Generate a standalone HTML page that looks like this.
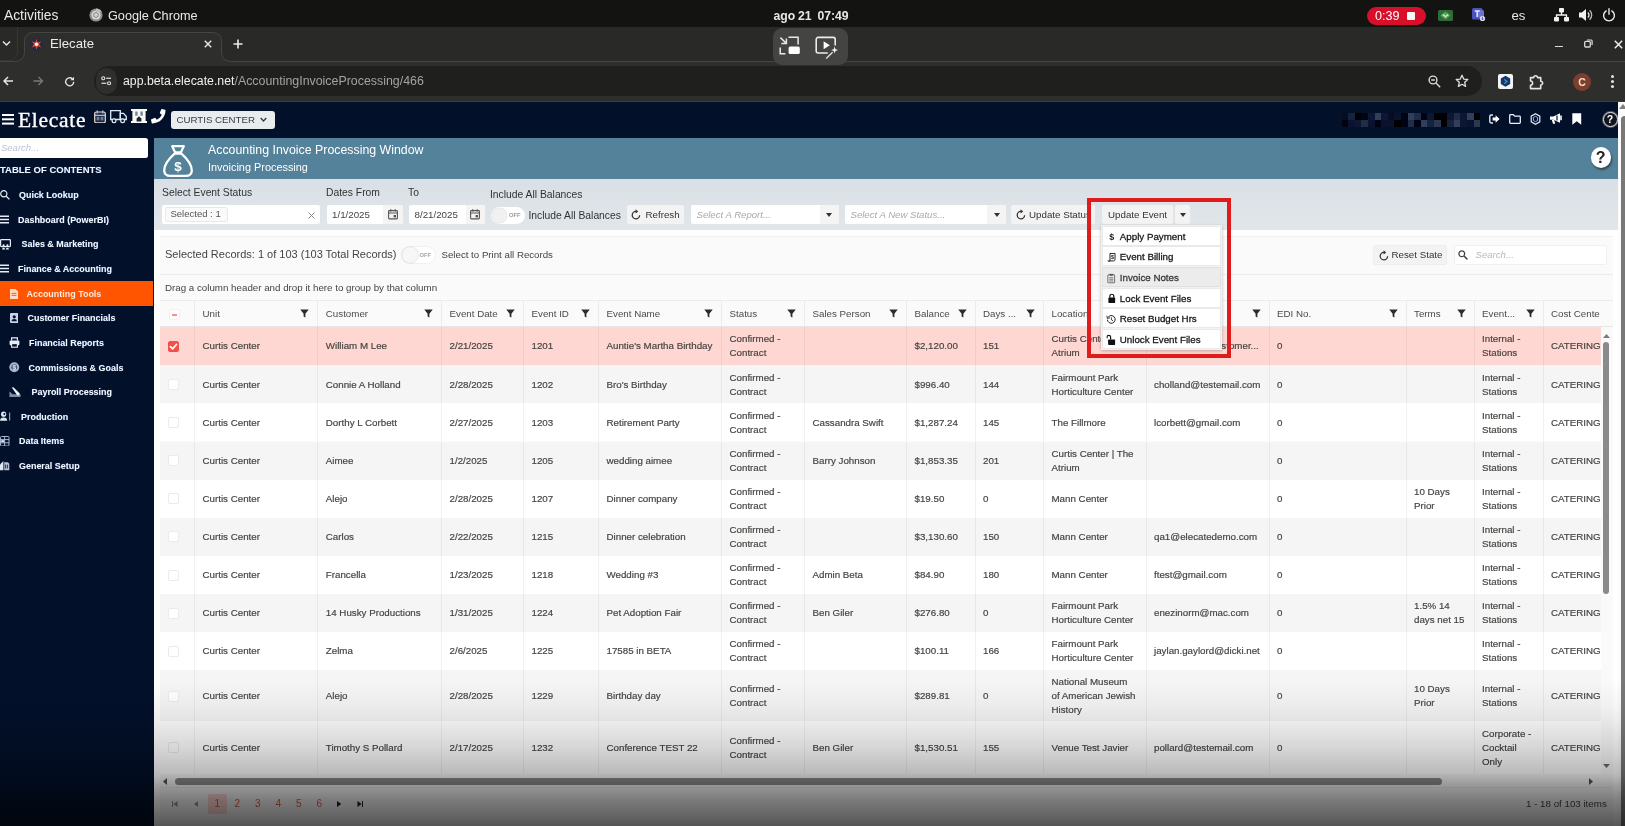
<!DOCTYPE html>
<html lang="en">
<head>
<meta charset="utf-8">
<title>Elecate</title>
<style>
*{box-sizing:border-box;margin:0;padding:0}
html,body{width:1625px;height:826px;overflow:hidden;background:#02102a}
body{font-family:"Liberation Sans",sans-serif;font-size:9.75px;color:#4a4a4a;position:relative;filter:blur(.45px)}
.abs{position:absolute}
svg{display:block}
/* ---------- OS top bar ---------- */
#os{position:absolute;left:0;top:0;width:1625px;height:27px;z-index:10;background:#131312;color:#e8e8e8;font-size:13px}
#os .t{position:absolute;top:0;line-height:32px;white-space:nowrap;font-weight:500}
/* ---------- chrome ---------- */
#tabs{position:absolute;left:0;top:27px;width:1625px;height:34px;background:#292927}
#tool{position:absolute;left:0;top:61px;width:1625px;height:40.500px;background:#2e2e2c;border-top:1px solid #454543;border-bottom:1px solid #3d3d3b}
#tab{position:absolute;left:24px;top:5px;width:198px;height:29px;z-index:4}
#url{position:absolute;left:94px;top:4px;width:1388px;height:30px;border-radius:15px;background:#1f1f1e}
/* ---------- app ---------- */
#app{position:absolute;left:0;top:102px;width:1618px;height:724px;background:#fff;overflow:hidden}
#hdr{position:absolute;left:0;top:0;width:1618px;height:35.5px;background:#02102a}
#side{position:absolute;left:0;top:35px;width:154px;height:690px;background:#02102a;color:#f4f7fb}
#side .it{position:absolute;left:0;width:152.500px;height:25px;font-weight:bold;font-size:8.950px;line-height:25px;white-space:nowrap;text-shadow:0 0 1px rgba(120,170,255,.55)}
#side .it span{position:absolute;top:.6px}
#side .it svg{position:absolute}
#ph{position:absolute;left:154px;top:35.500px;width:1464px;height:41.5px;background:#54829a;color:#fff}
#fb{position:absolute;left:154px;top:77px;width:1464px;height:51.400px;background:linear-gradient(#d9e0e5,#e1e6ea);color:#2a2a2a}
#fb .lb{position:absolute;font-size:10.330px;margin-top:.6px;white-space:nowrap;color:#303336}
.inp{position:absolute;top:25.5px;height:19.5px;background:#fff;border-radius:2px}
.btn{position:absolute;top:25.5px;height:19.5px;background:#f3f3f3;border-radius:2px;white-space:nowrap;font-size:9.75px;line-height:19.5px;color:#333}
.ph{font-style:italic;color:#a9a9a9}
/* grid */
#gw{position:absolute;left:160px;top:130px;width:1452.500px;height:600px;background:#fafafa}
#gw:before{content:"";position:absolute;left:0;top:0;width:100%;height:4px;background:#fff;border-bottom:1px solid #f1f1f1}
#tb{position:absolute;left:0;top:0;width:1452.500px;height:42.500px;border-bottom:1px solid #ececec}
#gp{position:absolute;left:0;top:43px;width:1452.500px;height:26px;line-height:25px;padding-left:5px;font-size:9.750px;color:#444;border-bottom:1px solid #ececec}
.ghead{position:absolute;left:0;top:69px;width:1452.500px;height:26px;background:#fafafa;border-bottom:1px solid #e6e6e6}
.hc{position:absolute;top:0;height:25px;border-left:1px solid #ebebeb;line-height:25px;color:#4a4a4a;white-space:nowrap;overflow:hidden}
.hc:first-child{border-left:none}
.hc .ht{position:absolute;left:7.500px;top:0}
.fn{position:absolute;right:8px;top:8px;width:9px;height:9px;fill:#2b2b2b}
.gr{position:absolute;left:0;width:1441px;background:#fff}
.gr.alt{background:#f5f5f5}
.gr.sel{background:#ffd7d2}
.c{position:absolute;top:0;height:100%;border-left:1px solid rgba(0,0,0,.055);display:flex;align-items:center;padding:.6px 0 0 7.500px;line-height:14.100px;white-space:nowrap;overflow:hidden;color:#45423f;-webkit-text-stroke:.18px #4a4846}
.c0{border-left:none;padding:.6px 0 0 8px}
.cb{display:block;width:11px;height:11px;border:1px solid #ebebeb;border-radius:2px;background:#fff}
.cb.on{background:#f4504a;border-color:#f4504a}
.cb.on svg{width:11px;height:11px;margin:-1px}
.cbm{position:absolute;left:8.500px;top:8px;width:11px;height:11px;border:1px solid #f0f0f0;border-radius:2px;background:#fff}
.cbm:after{content:"";position:absolute;left:2px;top:4px;width:5px;height:1.500px;background:#f3938c}
.di{position:absolute;left:.5px;width:119.500px;height:20px;background:#fff;border:1px solid #e9e9e9;white-space:nowrap;font-size:9.750px;color:#111;-webkit-text-stroke:.28px #1c1c1c}
.di.hov{background:#ececec;border-color:#e0e0e0}
.di svg{position:absolute;transform:translateX(-1.200px) scale(.9);transform-origin:50% 50%}
.di span{position:absolute;left:17.300px;top:0;line-height:19px}
</style>
</head>
<body>
<div id="os">
 <span class="t" style="left:4px;font-size:13.800px">Activities</span>
 <svg class="abs" style="left:89px;top:8px" width="14" height="14" viewBox="0 0 14 14"><circle cx="7" cy="7" r="6.6" fill="#8d8d8d"/><circle cx="7" cy="7" r="4.6" fill="#d6d6d6"/><circle cx="7" cy="7" r="2.7" fill="#7a7a7a"/><path d="M7 .4A6.6 6.6 0 0 1 12.7 3.7H7z" fill="#bdbdbd"/><circle cx="7" cy="7" r="2" fill="#cfcfcf"/></svg>
 <span class="t" style="left:108px;font-size:12.7px">Google Chrome</span>
 <span class="t" style="left:773.500px;font-size:12.200px;font-weight:bold;word-spacing:-.5px">ago 21&nbsp; 07:49</span>
 <div class="abs" style="left:1367px;top:7px;width:58.5px;height:18px;border-radius:9px;background:#d70f2b"></div>
 <span class="t" style="left:1375px;font-size:12.6px;color:#fff">0:39</span>
 <div class="abs" style="left:1406.5px;top:11.5px;width:8.5px;height:8.5px;background:#f2f7f7;border-radius:1px"></div>
 <svg class="abs" style="left:1438px;top:10px" width="15" height="11" viewBox="0 0 15 11"><rect width="15" height="11" rx="1.5" fill="#2f6b35"/><path d="M7.5 1.6l5 3.9-5 3.9-5-3.9z" fill="#5aa35c"/><path d="M4.8 4.4l2.7 2.3 2.7-2.3" stroke="#d9ead9" stroke-width="1.3" fill="none"/></svg>
 <svg class="abs" style="left:1472px;top:7px" width="16" height="16" viewBox="0 0 16 16"><rect x="0" y="1" width="10.5" height="11.5" rx="1.5" fill="#4a53bd"/><rect x="6" y="3" width="6" height="8" rx="1.5" fill="#6b74d6"/><path d="M2.7 4h5M5.2 4v6" stroke="#e9ebff" stroke-width="1.5"/><circle cx="10.5" cy="11.5" r="2.6" fill="#dfe3f3"/><path d="M10.5 9.8v2.6M9.3 11.6l1.2 1.3 1.2-1.3" stroke="#4a53bd" stroke-width=".9" fill="none"/></svg>
 <span class="t" style="left:1511.5px;font-size:13.2px">es</span>
 <svg class="abs" style="left:1554px;top:8px" width="15" height="14" viewBox="0 0 15 14"><rect x="5" y="0" width="5" height="4.4" rx=".8" fill="#f2f2f2"/><rect x="0" y="9" width="5" height="4.4" rx=".8" fill="#f2f2f2"/><rect x="10" y="9" width="5" height="4.4" rx=".8" fill="#f2f2f2"/><path d="M7.5 4v3M2.5 9.5V7h10v2.5" stroke="#f2f2f2" stroke-width="1.3" fill="none"/></svg>
 <svg class="abs" style="left:1579px;top:8px" width="15" height="14" viewBox="0 0 15 14"><path d="M0 4.6h2.8L7 1v12L2.8 9.4H0z" fill="#f2f2f2"/><path d="M8.8 4.4a3.4 3.4 0 0 1 0 5.2" stroke="#f2f2f2" stroke-width="1.3" fill="none"/><path d="M10.6 2.3a6.3 6.3 0 0 1 0 9.4" stroke="#bdbdbd" stroke-width="1.3" fill="none"/></svg>
 <svg class="abs" style="left:1602px;top:8px" width="14" height="14" viewBox="0 0 14 14"><path d="M4.2 2.9a5.4 5.4 0 1 0 5.6 0" stroke="#ededed" stroke-width="1.4" fill="none" stroke-linecap="round"/><path d="M7 .8v5.4" stroke="#ededed" stroke-width="1.4" stroke-linecap="round"/></svg>
</div>

<div id="tabs">
 <svg class="abs" style="left:2px;top:13px" width="9" height="7" viewBox="0 0 9 7"><path d="M1 1.5l3.5 3.5L8 1.5" stroke="#e3e3e3" stroke-width="1.5" fill="none"/></svg>
 <div class="abs" style="left:-10px;top:-12px;width:28px;height:45.500px;border:1px solid #373735;border-radius:9px"></div>
 <svg class="abs" style="left:14px;top:5px;z-index:3" width="218" height="31" viewBox="0 0 218 31"><path d="M0 29.500Q10.500 29.500 10.500 20V9.500Q10.500 .5 19.500 .5H198.500Q207.500 .5 207.500 9.500V20Q207.500 29.500 218 29.500V31H0z" fill="#2e2e2c"/><path d="M0 29.500Q10.500 29.500 10.500 20V9.500Q10.500 .5 19.500 .5H198.500Q207.500 .5 207.500 9.500V20Q207.500 29.500 218 29.500" fill="none" stroke="#454543" stroke-width="1"/></svg>
 <div id="tab">
  <svg class="abs" style="left:6px;top:6px" width="13" height="13" viewBox="0 0 13 13"><circle cx="6.500" cy="6.500" r="6.300" fill="#1d2a48"/><path d="M6.500 .8l1.200 3.600 3.700-1.200-2.400 3 2.400 3.200-3.700-1.200-1.200 3.600-1.200-3.600-3.700 1.200 2.400-3.200-2.400-3 3.700 1.200z" fill="#d8482f"/><circle cx="6.500" cy="6.300" r="1.800" fill="#f3eee8"/></svg>
  <span class="abs" style="left:26px;top:0;line-height:24px;font-size:13.200px;color:#ececec;font-weight:500">Elecate</span>
  <svg class="abs" style="left:180px;top:8px" width="8" height="8" viewBox="0 0 8 8"><path d="M.8.8l6.400 6.400M7.200.8L.8 7.200" stroke="#e8e8e8" stroke-width="1.400"/></svg>
 </div>
 <svg class="abs" style="left:233px;top:12px" width="10" height="10" viewBox="0 0 10 10"><path d="M5 .5v9M.5 5h9" stroke="#ececec" stroke-width="1.6"/></svg>
 <div class="abs" style="left:773px;top:.5px;width:74.5px;height:37.5px;border-radius:9px;background:#444443;z-index:5"></div>
 <svg class="abs" style="left:779px;top:9px;z-index:6" width="22" height="20" viewBox="0 0 22 20"><path d="M9.5 1.2h9.6v7.2M1.2 11.5v6.2h5.2" stroke="#e9e9e9" stroke-width="1.5" fill="none"/><rect x="9.6" y="10.4" width="11.2" height="7.6" rx="1.6" fill="#fff"/><path d="M1.4 1.6l5.6 5.4M7.4 2.4v5h-5" stroke="#e9e9e9" stroke-width="1.5" fill="none"/></svg>
 <svg class="abs" style="left:815px;top:9px;z-index:6" width="26" height="25" viewBox="0 0 26 25"><path d="M20.2 9.5V3.4a2 2 0 0 0-2-2H3.2a2 2 0 0 0-2 2V15a2 2 0 0 0 2 2h9.6" stroke="#ececec" stroke-width="1.6" fill="none"/><path d="M8.6 5.2l6.2 4-6.2 4z" fill="#fff"/><path d="M19.6 10.6l.9 2.6 2.6.9-2.6.9-.9 2.6-.9-2.6-2.6-.9 2.6-.9z" fill="#f4f4f4"/><path d="M17.6 16.2l-6.4 6.4" stroke="#e0e0e0" stroke-width="1.4"/></svg>
 <div class="abs" style="left:1555px;top:18.5px;width:8px;height:1.6px;background:#d9d9d9"></div>
 <svg class="abs" style="left:1584px;top:12px" width="9" height="9" viewBox="0 0 9 9"><rect x=".7" y="2.4" width="5.6" height="5.6" rx="1" stroke="#dcdcdc" stroke-width="1.3" fill="none"/><path d="M3 1h4.2a.9.9 0 0 1 .9.9V6" stroke="#dcdcdc" stroke-width="1.2" fill="none"/></svg>
 <svg class="abs" style="left:1614px;top:13px" width="9" height="9" viewBox="0 0 9 9"><path d="M.8.8l7.4 7.4M8.200.8L.8 8.200" stroke="#ececec" stroke-width="1.5"/></svg>
</div>
<div id="tool">
 <svg class="abs" style="left:3px;top:14px" width="10.500" height="10" viewBox="0 0 13 12"><path d="M6.2 1L1.200 6l5 5M1.400 6h11" stroke="#e6e6e6" stroke-width="1.900" fill="none"/></svg>
 <svg class="abs" style="left:33px;top:14px" width="10.500" height="10" viewBox="0 0 13 12"><path d="M6.800 1l5 5-5 5M11.600 6H.6" stroke="#7a7a78" stroke-width="1.6" fill="none"/></svg>
 <svg class="abs" style="left:63.500px;top:13.500px" width="11.500" height="11.500" viewBox="0 0 14 14"><path d="M11.800 7a4.900 4.900 0 1 1-1.500-3.500" stroke="#e6e6e6" stroke-width="1.600" fill="none"/><path d="M12.200.8v4.400H7.800z" fill="#e6e6e6"/></svg>
 <div id="url">
  <div class="abs" style="left:2px;top:2px;width:21px;height:26px;border-radius:13px;background:#2f2f2d"></div>
  <svg class="abs" style="left:7px;top:10px" width="10.500" height="9.700" viewBox="0 0 13 12"><circle cx="2.800" cy="2.800" r="1.900" stroke="#dedede" stroke-width="1.400" fill="none"/><path d="M6.400 2.800h6" stroke="#dedede" stroke-width="1.500"/><circle cx="10" cy="9" r="1.900" stroke="#dedede" stroke-width="1.400" fill="none"/><path d="M.6 9h6" stroke="#dedede" stroke-width="1.500"/></svg>
  <span class="abs" style="left:29px;top:0;line-height:30px;font-size:12.300px;color:#f0f0f0;white-space:nowrap">app.beta.elecate.net<span style="color:#a3a3a1;font-size:12.400px">/AccountingInvoiceProcessing/466</span></span>
  <svg class="abs" style="left:1334px;top:9px" width="13" height="13" viewBox="0 0 13 13"><circle cx="5" cy="5" r="3.900" stroke="#dcdcdc" stroke-width="1.400" fill="none"/><path d="M8 8l4.200 4.200M3.200 5h3.600" stroke="#dcdcdc" stroke-width="1.400"/></svg>
  <svg class="abs" style="left:1361px;top:8px" width="14" height="14" viewBox="0 0 14 14"><path d="M7 1.300l1.700 3.800 4.100.4-3.100 2.800.9 4.100L7 10.300l-3.600 2.100.9-4.100L1.200 5.500l4.100-.4z" stroke="#dedede" stroke-width="1.300" fill="none" stroke-linejoin="round"/></svg>
 </div>
 <svg class="abs" style="left:1498px;top:12px" width="15" height="15" viewBox="0 0 15 15"><rect width="15" height="15" rx="2" fill="#f5f5f5"/><path d="M7.500 1.800l4.700 2.700v5.600l-4.700 2.700-4.700-2.700V4.500z" fill="#143a6b"/><path d="M6.300 5.300l2.600 2.200-2.600 2.200" stroke="#4aa3df" stroke-width="1.100" fill="none"/></svg>
 <svg class="abs" style="left:1528px;top:12px" width="17" height="16" viewBox="0 0 17 16"><path d="M2.500 3.600h3.200a1.900 1.900 0 1 1 3.800 0h3.200v3.600a1.900 1.900 0 1 1 0 3.800v3.600H2.500v-3.400a1.900 1.900 0 1 0 0-4.200z" stroke="#e6e6e6" stroke-width="1.600" fill="none" stroke-linejoin="round"/></svg>
 <div class="abs" style="left:1573px;top:10.500px;width:18px;height:18px;border-radius:9px;background:#7b3f2c;color:#f2ddd3;font-size:10.500px;line-height:18px;text-align:center;font-weight:bold">C</div>
 <div class="abs" style="left:1611px;top:13px;width:3px;height:3px;border-radius:2px;background:#e3e3e3;box-shadow:0 5px 0 #e3e3e3,0 10px 0 #e3e3e3"></div>
</div>

<div id="app">
<div id="hdr">
 <div class="abs" style="left:1.500px;top:12px;width:12px;height:2.200px;background:#fff;box-shadow:0 4.300px 0 #fff,0 8.600px 0 #fff"></div>
 <span class="abs" style="left:18px;top:2px;font-family:'Liberation Serif',serif;font-size:21.500px;line-height:32px;color:#fff;letter-spacing:.72px;-webkit-text-stroke:.35px #fff">Elecate</span>
 <svg class="abs" style="left:94px;top:7.500px" width="12" height="13.500" viewBox="0 0 12 13.500"><rect x=".7" y="2" width="10.600" height="10.800" rx="1.600" fill="#1b2740" stroke="#e9dcd6" stroke-width="1.200"/><path d="M3.300 .4v3M8.700 .4v3" stroke="#9fb6e0" stroke-width="1.500"/><path d="M1 5.300h10" stroke="#e9dcd6" stroke-width="1"/><rect x="2.600" y="6.800" width="2.800" height="3.600" fill="#6f7c98"/><rect x="6.600" y="6.800" width="2.800" height="3.600" fill="#6f7c98"/></svg>
 <svg class="abs" style="left:110px;top:8px" width="17" height="13.500" viewBox="0 0 17 13.500"><path d="M.7 .7h9.600v8.800H.7z" fill="none" stroke="#dfeaf7" stroke-width="1.300"/><path d="M10.300 3.400h3.200l2.800 3.200v2.900h-6z" fill="none" stroke="#dfeaf7" stroke-width="1.300"/><circle cx="4" cy="10.800" r="1.900" fill="#02102a" stroke="#dfeaf7" stroke-width="1.200"/><circle cx="12.600" cy="10.800" r="1.900" fill="#02102a" stroke="#dfeaf7" stroke-width="1.200"/></svg>
 <svg class="abs" style="left:131px;top:7px" width="16" height="14" viewBox="0 0 16 14"><path d="M0 0h16v2h-1.400v10H16v2H0v-2h1.400V2H0z" fill="#fbfaf4"/><path d="M4.200 2.400h2.400v4.400H4.200zM9.400 2.400h2.400v4.400H9.400z" fill="#7d8699"/><path d="M5.600 12.500V9.600L8 7.200l2.400 2.400v2.900z" fill="#1a2438"/></svg>
 <svg class="abs" style="left:151px;top:7px" width="14.500" height="14.500" viewBox="0 0 512 512"><path fill="#fff" d="M493.400 24.600l-104-24c-11.300-2.600-22.900 3.300-27.500 13.900l-48 112c-4.200 9.800-1.400 21.300 6.900 28l60.600 49.600c-36 76.700-98.900 140.500-177.200 177.200l-49.600-60.600c-6.800-8.300-18.200-11.100-28-6.900l-112 48C3.900 366.500-2 378.100.6 389.400l24 104C27.100 504.200 36.700 512 48 512c256.100 0 464-207.500 464-464 0-11.200-7.700-20.900-18.600-23.400z"/></svg>
 <div class="abs" style="left:170.500px;top:8.500px;width:104px;height:18.500px;border-radius:3px;background:#e9ecef"></div>
 <span class="abs" style="left:176.500px;top:8.500px;line-height:18.500px;font-size:9.700px;color:#333a45;white-space:nowrap">CURTIS CENTER</span>
 <svg class="abs" style="left:260px;top:15px" width="7" height="5.500" viewBox="0 0 7 5.500"><path d="M.7 1l2.800 2.900L6.300 1" stroke="#333a45" stroke-width="1.400" fill="none"/></svg>
 <div class="abs" style="left:1341.5px;top:10.5px;width:6.8px;height:7.200px;background:#060c22"></div><div class="abs" style="left:1348.1px;top:10.5px;width:6.8px;height:7.200px;background:#15233f"></div><div class="abs" style="left:1354.7px;top:10.5px;width:6.8px;height:7.200px;background:#000000"></div><div class="abs" style="left:1361.3px;top:10.5px;width:6.8px;height:7.200px;background:#000313"></div><div class="abs" style="left:1367.9px;top:10.5px;width:6.8px;height:7.200px;background:#0b1733"></div><div class="abs" style="left:1374.5px;top:10.5px;width:6.8px;height:7.200px;background:#323f5a"></div><div class="abs" style="left:1381.1px;top:10.5px;width:6.8px;height:7.200px;background:#0b1733"></div><div class="abs" style="left:1387.7px;top:10.5px;width:6.8px;height:7.200px;background:#060c22"></div><div class="abs" style="left:1394.3px;top:10.5px;width:6.8px;height:7.200px;background:#0a1230"></div><div class="abs" style="left:1400.9px;top:10.5px;width:6.8px;height:7.200px;background:#000313"></div><div class="abs" style="left:1407.5px;top:10.5px;width:6.8px;height:7.200px;background:#323f5a"></div><div class="abs" style="left:1414.1px;top:10.5px;width:6.8px;height:7.200px;background:#1f2d48"></div><div class="abs" style="left:1420.7px;top:10.5px;width:6.8px;height:7.200px;background:#000313"></div><div class="abs" style="left:1427.3px;top:10.5px;width:6.8px;height:7.200px;background:#0b1733"></div><div class="abs" style="left:1433.9px;top:10.5px;width:6.8px;height:7.200px;background:#000000"></div><div class="abs" style="left:1440.5px;top:10.5px;width:6.8px;height:7.200px;background:#000000"></div><div class="abs" style="left:1447.1px;top:10.5px;width:6.8px;height:7.200px;background:#0b1733"></div><div class="abs" style="left:1453.7px;top:10.5px;width:6.8px;height:7.200px;background:#1f2d48"></div><div class="abs" style="left:1460.3px;top:10.5px;width:6.8px;height:7.200px;background:#0b1733"></div><div class="abs" style="left:1466.9px;top:10.5px;width:6.8px;height:7.200px;background:#323f5a"></div><div class="abs" style="left:1473.5px;top:10.5px;width:6.8px;height:7.200px;background:#000000"></div><div class="abs" style="left:1341.5px;top:17.5px;width:6.8px;height:7.200px;background:#000313"></div><div class="abs" style="left:1348.1px;top:17.5px;width:6.8px;height:7.200px;background:#0a1230"></div><div class="abs" style="left:1354.7px;top:17.5px;width:6.8px;height:7.200px;background:#0b1733"></div><div class="abs" style="left:1361.3px;top:17.5px;width:6.8px;height:7.200px;background:#1f2d48"></div><div class="abs" style="left:1367.9px;top:17.5px;width:6.8px;height:7.200px;background:#0a1230"></div><div class="abs" style="left:1374.5px;top:17.5px;width:6.8px;height:7.200px;background:#000313"></div><div class="abs" style="left:1381.1px;top:17.5px;width:6.8px;height:7.200px;background:#0a1230"></div><div class="abs" style="left:1387.7px;top:17.5px;width:6.8px;height:7.200px;background:#0a1230"></div><div class="abs" style="left:1394.3px;top:17.5px;width:6.8px;height:7.200px;background:#000000"></div><div class="abs" style="left:1400.9px;top:17.5px;width:6.8px;height:7.200px;background:#000313"></div><div class="abs" style="left:1407.5px;top:17.5px;width:6.8px;height:7.200px;background:#1f2d48"></div><div class="abs" style="left:1414.1px;top:17.5px;width:6.8px;height:7.200px;background:#000313"></div><div class="abs" style="left:1420.7px;top:17.5px;width:6.8px;height:7.200px;background:#323f5a"></div><div class="abs" style="left:1427.3px;top:17.5px;width:6.8px;height:7.200px;background:#15233f"></div><div class="abs" style="left:1433.9px;top:17.5px;width:6.8px;height:7.200px;background:#2a3852"></div><div class="abs" style="left:1440.5px;top:17.5px;width:6.8px;height:7.200px;background:#000000"></div><div class="abs" style="left:1447.1px;top:17.5px;width:6.8px;height:7.200px;background:#15233f"></div><div class="abs" style="left:1453.7px;top:17.5px;width:6.8px;height:7.200px;background:#323f5a"></div><div class="abs" style="left:1460.3px;top:17.5px;width:6.8px;height:7.200px;background:#0b1733"></div><div class="abs" style="left:1466.9px;top:17.5px;width:6.8px;height:7.200px;background:#0a1230"></div><div class="abs" style="left:1473.5px;top:17.5px;width:6.8px;height:7.200px;background:#2a3852"></div>
 <svg class="abs" style="left:1489px;top:11.500px" width="11" height="10" viewBox="0 0 11 10"><path d="M4 1H2.200A1.400 1.400 0 0 0 .8 2.400v5.200A1.400 1.400 0 0 0 2.200 9H4" stroke="#dfeaf7" stroke-width="1.400" fill="none"/><path d="M3.600 3.600h3V1.200L10.600 5 6.600 8.800V6.400h-3z" fill="#fff"/></svg>
 <svg class="abs" style="left:1509px;top:12px" width="12" height="10" viewBox="0 0 12 10"><path d="M.7 1.400a.8.8 0 0 1 .8-.8h2.800l1.300 1.500h4.900a.8.800 0 0 1 .8.800v5.600a.8.800 0 0 1-.8.800h-9a.8.800 0 0 1-.8-.8z" stroke="#e9eef8" stroke-width="1.300" fill="none"/></svg>
 <svg class="abs" style="left:1529.500px;top:11px" width="11" height="12" viewBox="0 0 11 12"><path d="M5.500 .7l4.300 2.500v5.600L5.500 11.300 1.200 8.800V3.200z" stroke="#dfeaf7" stroke-width="1.200" fill="none"/><path d="M5.500 3.300l2.100 1.200v3L5.500 8.700 3.400 7.500v-3z" stroke="#9db7e6" stroke-width="1" fill="none"/></svg>
 <svg class="abs" style="left:1550px;top:11px" width="12.500" height="11.500" viewBox="0 0 12.500 11.500"><path d="M0 3.600h3.400L10 .3v9.400L3.400 6.800H0z" fill="#fff"/><path d="M1.800 7h2.400l1 3.800H3z" fill="#fff"/><path d="M11 2.600v4.600" stroke="#fff" stroke-width="1.600"/><path d="M7 2.600v4.800" stroke="#02102a" stroke-width="1.200"/></svg>
 <svg class="abs" style="left:1572px;top:11px" width="9.500" height="12" viewBox="0 0 9.500 12"><path d="M.3.300h8.900v11.400L4.750 8.300.3 11.700z" fill="#fff"/></svg>
 <div class="abs" style="left:1602.500px;top:9.500px;width:15px;height:15px;border-radius:8px;border:1.600px solid #e8e8e8;background:#11151f;box-shadow:0 0 0 1px #555a66;color:#fff;font-weight:bold;font-size:10.500px;line-height:12px;text-align:center">?</div>
</div>

<div id="side">
 <div class="abs" style="left:-2px;top:.5px;width:149.500px;height:20.500px;background:#fff;border-radius:2.500px"></div>
 <span class="abs" style="left:1px;top:.5px;line-height:20.500px;font-size:9.500px;font-style:italic;color:#b9c6d6">Search...</span>
 <span class="abs" style="left:0;top:26px;line-height:14px;font-size:9.500px;font-weight:bold;color:#f1f5fb;white-space:nowrap;text-shadow:0 0 1px rgba(120,170,255,.5)">TABLE OF CONTENTS</span>
 <div class="it" style="top:45.500px"><svg style="left:0;top:7.500px" width="10" height="10" viewBox="0 0 10 10"><circle cx="3.800" cy="3.800" r="3.100" stroke="#e8eef8" stroke-width="1.200" fill="none"/><path d="M6.200 6.200l3.200 3.200" stroke="#e8eef8" stroke-width="1.300"/></svg><span style="left:19px">Quick Lookup</span></div>
 <div class="it" style="top:70px"><svg style="left:0;top:8px" width="9" height="9" viewBox="0 0 9 9"><path d="M0 1.200h9M0 4.500h9M0 7.800h9" stroke="#e8eef8" stroke-width="1.400"/></svg><span style="left:18px">Dashboard (PowerBI)</span></div>
 <div class="it" style="top:94.500px"><svg style="left:0;top:7px" width="11" height="11" viewBox="0 0 11 11"><rect x=".6" y=".6" width="9.800" height="7" rx=".8" stroke="#e8eef8" stroke-width="1.200" fill="none"/><path d="M2 10.400a1.600 1.600 0 0 1 3.200 0zM5.800 10.400a1.600 1.600 0 0 1 3.200 0z" fill="#e8eef8"/><circle cx="3.600" cy="6.400" r="1.100" fill="#e8eef8"/><circle cx="7.400" cy="6.400" r="1.100" fill="#e8eef8"/></svg><span style="left:21.500px">Sales &amp; Marketing</span></div>
 <div class="it" style="top:119px"><svg style="left:0;top:8px" width="9" height="9" viewBox="0 0 9 9"><path d="M0 1.200h9M0 4.500h9M0 7.800h9" stroke="#e8eef8" stroke-width="1.400"/></svg><span style="left:18px">Finance &amp; Accounting</span></div>
 <div class="it" style="top:144.300px;background:#ff5500;height:25px;text-shadow:none;color:#ffe9dc"><svg style="left:9.500px;top:7.500px" width="8" height="10" viewBox="0 0 8 10"><path d="M0 0h5.400L8 2.600V10H0z" fill="#ffd9c4"/><path d="M1.600 4.400h4.800M1.600 6.400h4.800" stroke="#ff5500" stroke-width=".9"/></svg><span style="left:26.500px">Accounting Tools</span></div>
 <div class="it" style="top:168.800px"><svg style="left:9.500px;top:7.500px" width="8.500" height="10" viewBox="0 0 8.500 10"><rect width="8.500" height="10" rx="1" fill="#c9d3e6"/><circle cx="4.250" cy="3.800" r="1.600" fill="#02102a"/><path d="M1.600 8.200a2.650 2.200 0 0 1 5.300 0z" fill="#02102a"/></svg><span style="left:27.500px">Customer Financials</span></div>
 <div class="it" style="top:193.400px"><svg style="left:8.500px;top:7px" width="11" height="11" viewBox="0 0 11 11"><path d="M2.600 3.400V.8h5.800v2.600" stroke="#e8eef8" stroke-width="1.200" fill="none"/><rect x=".6" y="3.600" width="9.800" height="4.600" rx="1" fill="#e8eef8"/><rect x="2.600" y="6.600" width="5.800" height="3.600" fill="#02102a" stroke="#e8eef8" stroke-width="1.100"/></svg><span style="left:29px">Financial Reports</span></div>
 <div class="it" style="top:218px"><svg style="left:9px;top:7px" width="10.500" height="10.500" viewBox="0 0 10.500 10.500"><circle cx="5.250" cy="5.250" r="4.900" fill="#aeb9cf"/><circle cx="5.250" cy="5.250" r="3" fill="#4d5a77"/><text x="5.250" y="7.600" font-size="6.500" font-weight="bold" text-anchor="middle" fill="#d8e0ef" font-family="Liberation Sans, sans-serif">$</text></svg><span style="left:28.500px">Commissions &amp; Goals</span></div>
 <div class="it" style="top:242.600px"><svg style="left:9px;top:7px" width="12" height="10.500" viewBox="0 0 12 10.500"><path d="M.4 10.200V4.600l3.400 2.600h7.800v3z" fill="#7c8aa6"/><path d="M2.800.6l1.600-.4 6.400 6.400-.6 1.600-1.800.2z" fill="#f0f3f9"/></svg><span style="left:31.500px">Payroll Processing</span></div>
 <div class="it" style="top:267.200px"><svg style="left:0;top:7px" width="11" height="11" viewBox="0 0 11 11"><circle cx="3.600" cy="3.200" r="2.600" fill="#dfe6f3"/><path d="M0 9.800a3.600 3.400 0 0 1 7.200 0z" fill="#dfe6f3"/><path d="M9.600 1.600v8" stroke="#8f9cb8" stroke-width="1.200"/><circle cx="4.400" cy="3" r="1" fill="#02102a"/></svg><span style="left:21px">Production</span></div>
 <div class="it" style="top:291.800px"><svg style="left:0;top:7px" width="9.500" height="10.500" viewBox="0 0 9.500 10.500"><rect x=".5" y=".5" width="8.500" height="9.500" rx="1" fill="none" stroke="#aab6cd" stroke-width="1"/><path d="M.5 3.600h8.500M.5 6.800h8.500M4.600 .5v9.500" stroke="#aab6cd" stroke-width="1"/><rect x="1.200" y="4.200" width="2.800" height="2" fill="#e6ecf7"/></svg><span style="left:19px">Data Items</span></div>
 <div class="it" style="top:316.300px"><svg style="left:0;top:7px" width="9.500" height="10.500" viewBox="0 0 9.500 10.500"><path d="M0 10.200V4.400L3.400 1v9.200z" fill="#dfe6f3"/><path d="M4.200 10.200V2.200h3.600l1.500 1.600v6.400z" fill="#b4c0d8"/><path d="M5.600 4.600v3.800M7.400 4.600v3.800" stroke="#02102a" stroke-width=".8"/></svg><span style="left:19px">General Setup</span></div>
</div>

<div id="ph">
 <svg class="abs" style="left:7.500px;top:6.500px" width="32" height="34" viewBox="0 0 32 34"><path d="M10.200 2.200h11.600l-3 6.200h-5.600z" fill="none" stroke="#fff" stroke-width="2.200" stroke-linejoin="round"/><path d="M12.600 9.600C7 14.600 2.200 21.400 2.200 26.400c0 3.600 2.600 5.400 6.200 5.400h15.200c3.600 0 6.200-1.800 6.200-5.400 0-5-4.800-11.800-10.400-16.800z" fill="none" stroke="#fff" stroke-width="2.300" stroke-linejoin="round"/><text x="16" y="27.300" text-anchor="middle" font-family="Liberation Sans, sans-serif" font-weight="bold" font-size="13.500" fill="#fff">$</text></svg>
 <span class="abs" style="left:54px;top:5.500px;font-size:12.350px;line-height:15px;white-space:nowrap">Accounting Invoice Processing Window</span>
 <span class="abs" style="left:54px;top:22.500px;font-size:10.900px;line-height:14px;white-space:nowrap">Invoicing Processing</span>
 <div class="abs" style="left:1436.500px;top:9.500px;width:20.500px;height:20.500px;border-radius:11px;background:#fff;box-shadow:1px 2px 2px rgba(0,0,0,.45);color:#222;font-weight:bold;font-size:16px;line-height:21px;text-align:center">?</div>
</div>

<div id="fb">
 <span class="lb" style="left:8px;top:7px">Select Event Status</span>
 <span class="lb" style="left:172px;top:7px">Dates From</span>
 <span class="lb" style="left:254px;top:7px">To</span>
 <span class="lb" style="left:336px;top:9px">Include All Balances</span>
 <div class="inp" style="left:8px;width:157.500px"></div>
 <div class="abs" style="left:10.500px;top:27.500px;width:63px;height:15.500px;border:1px solid #e9e9e9;border-radius:2px;background:#fafafa;font-size:9.500px;line-height:12.800px;padding-left:5px;color:#555;white-space:nowrap">Selected : 1</div>
 <svg class="abs" style="left:154px;top:32.500px" width="7" height="7" viewBox="0 0 7 7"><path d="M.5.5l6 6M6.500.5l-6 6" stroke="#8a8a8a" stroke-width="1"/></svg>
 <div class="inp" style="left:172.500px;width:76px"></div>
 <div class="abs" style="left:229px;top:25.500px;width:19.500px;height:19.500px;background:#f4f4f4;border-radius:0 2px 2px 0"></div>
 <span class="abs" style="left:178px;top:25.500px;line-height:19.500px;font-size:9.750px;color:#444">1/1/2025</span>
 <svg class="abs cal" style="left:233.500px;top:30px" width="10" height="10.500" viewBox="0 0 10 10.500"><rect x=".6" y="1.600" width="8.800" height="8.300" rx=".8" fill="none" stroke="#555" stroke-width="1.100"/><path d="M.6 4h8.800" stroke="#555" stroke-width="1"/><path d="M2.800 .2v2.200M7.200 .2v2.200" stroke="#555" stroke-width="1.200"/><rect x="5.600" y="6" width="2.400" height="2.400" fill="#555"/></svg>
 <div class="inp" style="left:255px;width:76px"></div>
 <div class="abs" style="left:311.500px;top:25.500px;width:19.500px;height:19.500px;background:#f4f4f4;border-radius:0 2px 2px 0"></div>
 <span class="abs" style="left:260.500px;top:25.500px;line-height:19.500px;font-size:9.750px;color:#444">8/21/2025</span>
 <svg class="abs cal" style="left:316px;top:30px" width="10" height="10.500" viewBox="0 0 10 10.500"><rect x=".6" y="1.600" width="8.800" height="8.300" rx=".8" fill="none" stroke="#555" stroke-width="1.100"/><path d="M.6 4h8.800" stroke="#555" stroke-width="1"/><path d="M2.800 .2v2.200M7.200 .2v2.200" stroke="#555" stroke-width="1.200"/><rect x="5.600" y="6" width="2.400" height="2.400" fill="#555"/></svg>
 <div class="abs" style="left:337px;top:28px;width:34px;height:16.500px;border-radius:9px;background:#fff"></div>
 <div class="abs" style="left:337.500px;top:28.500px;width:15.500px;height:15.500px;border-radius:8px;background:#f1f1f1;box-shadow:0 0 1px rgba(0,0,0,.25)"></div>
 <span class="abs" style="left:355px;top:28px;line-height:17px;font-size:5.800px;font-weight:bold;color:#9a9a9a">OFF</span>
 <span class="lb" style="left:374.500px;top:30px">Include All Balances</span>
 <div class="btn" style="left:472.500px;width:57.500px"></div>
 <svg class="abs" style="left:477px;top:30px" width="10" height="11" viewBox="0 0 10 11"><path d="M8.600 6.200A3.700 3.700 0 1 1 5 2.400" stroke="#333" stroke-width="1.300" fill="none"/><path d="M4.600 .2l2.600 2.200-2.600 2.200z" fill="#333"/></svg>
 <span class="abs" style="left:491.500px;top:25.500px;line-height:19.500px;font-size:9.750px;color:#333">Refresh</span>
 <div class="inp" style="left:537px;width:147.500px"></div>
 <div class="abs" style="left:665.500px;top:25.500px;width:19px;height:19.500px;background:#f4f4f4;border-radius:0 2px 2px 0"></div>
 <span class="abs ph" style="left:542.500px;top:25.500px;line-height:19.500px;font-size:9.600px">Select A Report...</span>
 <svg class="abs" style="left:672px;top:33.500px" width="6" height="4" viewBox="0 0 6 4"><path d="M0 0h6L3 4z" fill="#333"/></svg>
 <div class="inp" style="left:691px;width:161px"></div>
 <div class="abs" style="left:833px;top:25.500px;width:19px;height:19.500px;background:#f4f4f4;border-radius:0 2px 2px 0"></div>
 <span class="abs ph" style="left:696.500px;top:25.500px;line-height:19.500px;font-size:9.600px">Select A New Status...</span>
 <svg class="abs" style="left:839.500px;top:33.500px" width="6" height="4" viewBox="0 0 6 4"><path d="M0 0h6L3 4z" fill="#333"/></svg>
 <div class="btn" style="left:856.500px;width:84px"></div>
 <svg class="abs" style="left:862px;top:30px" width="10" height="11" viewBox="0 0 10 11"><path d="M8.600 6.200A3.700 3.700 0 1 1 5 2.400" stroke="#333" stroke-width="1.300" fill="none"/><path d="M4.600 .2l2.600 2.200-2.600 2.200z" fill="#333"/></svg>
 <span class="abs" style="left:875px;top:25.500px;line-height:19.500px;font-size:9.750px;color:#333;white-space:nowrap">Update Status</span>
 <div class="btn" style="left:948px;width:71px"></div>
 <div class="btn" style="left:1020.500px;width:15.500px"></div>
 <span class="abs" style="left:954px;top:25.500px;line-height:19.500px;font-size:9.750px;color:#333;white-space:nowrap">Update Event</span>
 <svg class="abs" style="left:1025.500px;top:33.500px" width="6" height="4" viewBox="0 0 6 4"><path d="M0 0h6L3 4z" fill="#333"/></svg>
</div>

<div id="gw">
<div id="tb">
 <span class="abs" style="left:5px;top:14px;line-height:16px;font-size:11px;color:#444;white-space:nowrap">Selected Records: 1 of 103 (103 Total Records)</span>
 <div class="abs" style="left:241.500px;top:14.500px;width:33px;height:16.500px;border-radius:9px;background:#fff;box-shadow:0 0 0 1px #f0f0f0"></div>
 <div class="abs" style="left:242px;top:15px;width:15.500px;height:15.500px;border-radius:8px;background:#f7f7f7;box-shadow:0 0 1.500px rgba(0,0,0,.25)"></div>
 <span class="abs" style="left:259.500px;top:14.500px;line-height:17px;font-size:5.800px;font-weight:bold;color:#a5a5a5">OFF</span>
 <span class="abs" style="left:281.500px;top:15px;line-height:16px;font-size:9.700px;color:#444;white-space:nowrap">Select to Print all Records</span>
 <div class="abs" style="left:1213px;top:13px;width:74px;height:19.500px;border-radius:2px;background:#f3f3f3;border:1px solid #ededed"></div>
 <svg class="abs" style="left:1218.500px;top:17.500px" width="10" height="11" viewBox="0 0 10 11"><path d="M8.600 6.200A3.700 3.700 0 1 1 5 2.400" stroke="#333" stroke-width="1.300" fill="none"/><path d="M4.600 .2l2.600 2.200-2.600 2.200z" fill="#333"/></svg>
 <span class="abs" style="left:1231.500px;top:13px;line-height:19.500px;font-size:9.750px;color:#333;white-space:nowrap">Reset State</span>
 <div class="abs" style="left:1294px;top:13px;width:153px;height:19.500px;border-radius:2px;background:#fff;border:1px solid #f0f0f0"></div>
 <svg class="abs" style="left:1297.500px;top:18px" width="10" height="10" viewBox="0 0 10 10"><circle cx="3.800" cy="3.800" r="2.900" stroke="#444" stroke-width="1.300" fill="none"/><path d="M6 6l3.400 3.400" stroke="#444" stroke-width="1.500"/></svg>
 <span class="abs ph" style="left:1315.500px;top:13px;line-height:19.500px;font-size:9.600px;color:#b4bcc6">Search...</span>
</div>

<div id="gp">Drag a column header and drop it here to group by that column</div>
<div class="ghead">
<div class="hc" style="left:0px;width:34px"><span class="cbm"></span></div>
<div class="hc" style="left:34px;width:123.30000000000001px"><span class="ht">Unit</span><svg class="fn" viewBox="0 0 10 10"><path d="M0.3 0.6h9.4L6 5.2v4.2L4 8.2V5.2z"/></svg></div>
<div class="hc" style="left:157.3px;width:123.69999999999999px"><span class="ht">Customer</span><svg class="fn" viewBox="0 0 10 10"><path d="M0.3 0.6h9.4L6 5.2v4.2L4 8.2V5.2z"/></svg></div>
<div class="hc" style="left:281px;width:82px"><span class="ht">Event Date</span><svg class="fn" viewBox="0 0 10 10"><path d="M0.3 0.6h9.4L6 5.2v4.2L4 8.2V5.2z"/></svg></div>
<div class="hc" style="left:363px;width:75px"><span class="ht">Event ID</span><svg class="fn" viewBox="0 0 10 10"><path d="M0.3 0.6h9.4L6 5.2v4.2L4 8.2V5.2z"/></svg></div>
<div class="hc" style="left:438px;width:123px"><span class="ht">Event Name</span><svg class="fn" viewBox="0 0 10 10"><path d="M0.3 0.6h9.4L6 5.2v4.2L4 8.2V5.2z"/></svg></div>
<div class="hc" style="left:561px;width:83px"><span class="ht">Status</span><svg class="fn" viewBox="0 0 10 10"><path d="M0.3 0.6h9.4L6 5.2v4.2L4 8.2V5.2z"/></svg></div>
<div class="hc" style="left:644px;width:102px"><span class="ht">Sales Person</span><svg class="fn" viewBox="0 0 10 10"><path d="M0.3 0.6h9.4L6 5.2v4.2L4 8.2V5.2z"/></svg></div>
<div class="hc" style="left:746px;width:68.5px"><span class="ht">Balance</span><svg class="fn" viewBox="0 0 10 10"><path d="M0.3 0.6h9.4L6 5.2v4.2L4 8.2V5.2z"/></svg></div>
<div class="hc" style="left:814.5px;width:68.5px"><span class="ht">Days ...</span><svg class="fn" viewBox="0 0 10 10"><path d="M0.3 0.6h9.4L6 5.2v4.2L4 8.2V5.2z"/></svg></div>
<div class="hc" style="left:883px;width:102.5px"><span class="ht">Location</span></div>
<div class="hc" style="left:985.5px;width:123.0px"><span class="ht">Email</span><svg class="fn" viewBox="0 0 10 10"><path d="M0.3 0.6h9.4L6 5.2v4.2L4 8.2V5.2z"/></svg></div>
<div class="hc" style="left:1108.5px;width:137.0px"><span class="ht">EDI No.</span><svg class="fn" viewBox="0 0 10 10"><path d="M0.3 0.6h9.4L6 5.2v4.2L4 8.2V5.2z"/></svg></div>
<div class="hc" style="left:1245.5px;width:68.0px"><span class="ht">Terms</span><svg class="fn" viewBox="0 0 10 10"><path d="M0.3 0.6h9.4L6 5.2v4.2L4 8.2V5.2z"/></svg></div>
<div class="hc" style="left:1313.5px;width:69.0px"><span class="ht">Event...</span><svg class="fn" viewBox="0 0 10 10"><path d="M0.3 0.6h9.4L6 5.2v4.2L4 8.2V5.2z"/></svg></div>
<div class="hc" style="left:1382.5px;width:57.90000000000009px"><span class="ht">Cost Center</span></div>
</div>
<div class="gr sel" style="top:95.0px;height:38.4px">
<div class="c c0" style="left:0;width:34px"><span class="cb on"><svg viewBox="0 0 11 11"><path d="M2.4 5.7l2.2 2.2 4-4.6" fill="none" stroke="#fff" stroke-width="1.7" stroke-linecap="round" stroke-linejoin="round"/></svg></span></div>
<div class="c" style="left:34px;width:123.30000000000001px"><span>Curtis Center</span></div>
<div class="c" style="left:157.3px;width:123.69999999999999px"><span>William M Lee</span></div>
<div class="c" style="left:281px;width:82px"><span>2/21/2025</span></div>
<div class="c" style="left:363px;width:75px"><span>1201</span></div>
<div class="c" style="left:438px;width:123px"><span>Auntie's Martha Birthday</span></div>
<div class="c" style="left:561px;width:83px"><span>Confirmed -<br>Contract</span></div>
<div class="c" style="left:644px;width:102px"><span></span></div>
<div class="c" style="left:746px;width:68.5px"><span>$2,120.00</span></div>
<div class="c" style="left:814.5px;width:68.5px"><span>151</span></div>
<div class="c" style="left:883px;width:102.5px"><span>Curtis Center | The<br>Atrium</span></div>
<div class="c" style="left:985.5px;width:123.0px"><span>williaml@testcustomer...</span></div>
<div class="c" style="left:1108.5px;width:137.0px"><span>0</span></div>
<div class="c" style="left:1245.5px;width:68.0px"><span></span></div>
<div class="c" style="left:1313.5px;width:69.0px"><span>Internal -<br>Stations</span></div>
<div class="c" style="left:1382.5px;width:57.90000000000009px"><span>CATERING</span></div>
</div>
<div class="gr alt" style="top:133.4px;height:38.0px">
<div class="c c0" style="left:0;width:34px"><span class="cb"></span></div>
<div class="c" style="left:34px;width:123.30000000000001px"><span>Curtis Center</span></div>
<div class="c" style="left:157.3px;width:123.69999999999999px"><span>Connie A Holland</span></div>
<div class="c" style="left:281px;width:82px"><span>2/28/2025</span></div>
<div class="c" style="left:363px;width:75px"><span>1202</span></div>
<div class="c" style="left:438px;width:123px"><span>Bro's Birthday</span></div>
<div class="c" style="left:561px;width:83px"><span>Confirmed -<br>Contract</span></div>
<div class="c" style="left:644px;width:102px"><span></span></div>
<div class="c" style="left:746px;width:68.5px"><span>$996.40</span></div>
<div class="c" style="left:814.5px;width:68.5px"><span>144</span></div>
<div class="c" style="left:883px;width:102.5px"><span>Fairmount Park<br>Horticulture Center</span></div>
<div class="c" style="left:985.5px;width:123.0px"><span>cholland@testemail.com</span></div>
<div class="c" style="left:1108.5px;width:137.0px"><span>0</span></div>
<div class="c" style="left:1245.5px;width:68.0px"><span></span></div>
<div class="c" style="left:1313.5px;width:69.0px"><span>Internal -<br>Stations</span></div>
<div class="c" style="left:1382.5px;width:57.90000000000009px"><span>CATERING</span></div>
</div>
<div class="gr" style="top:171.4px;height:38.1px">
<div class="c c0" style="left:0;width:34px"><span class="cb"></span></div>
<div class="c" style="left:34px;width:123.30000000000001px"><span>Curtis Center</span></div>
<div class="c" style="left:157.3px;width:123.69999999999999px"><span>Dorthy L Corbett</span></div>
<div class="c" style="left:281px;width:82px"><span>2/27/2025</span></div>
<div class="c" style="left:363px;width:75px"><span>1203</span></div>
<div class="c" style="left:438px;width:123px"><span>Retirement Party</span></div>
<div class="c" style="left:561px;width:83px"><span>Confirmed -<br>Contract</span></div>
<div class="c" style="left:644px;width:102px"><span>Cassandra Swift</span></div>
<div class="c" style="left:746px;width:68.5px"><span>$1,287.24</span></div>
<div class="c" style="left:814.5px;width:68.5px"><span>145</span></div>
<div class="c" style="left:883px;width:102.5px"><span>The Fillmore</span></div>
<div class="c" style="left:985.5px;width:123.0px"><span>lcorbett@gmail.com</span></div>
<div class="c" style="left:1108.5px;width:137.0px"><span>0</span></div>
<div class="c" style="left:1245.5px;width:68.0px"><span></span></div>
<div class="c" style="left:1313.5px;width:69.0px"><span>Internal -<br>Stations</span></div>
<div class="c" style="left:1382.5px;width:57.90000000000009px"><span>CATERING</span></div>
</div>
<div class="gr alt" style="top:209.5px;height:38.0px">
<div class="c c0" style="left:0;width:34px"><span class="cb"></span></div>
<div class="c" style="left:34px;width:123.30000000000001px"><span>Curtis Center</span></div>
<div class="c" style="left:157.3px;width:123.69999999999999px"><span>Aimee</span></div>
<div class="c" style="left:281px;width:82px"><span>1/2/2025</span></div>
<div class="c" style="left:363px;width:75px"><span>1205</span></div>
<div class="c" style="left:438px;width:123px"><span>wedding aimee</span></div>
<div class="c" style="left:561px;width:83px"><span>Confirmed -<br>Contract</span></div>
<div class="c" style="left:644px;width:102px"><span>Barry Johnson</span></div>
<div class="c" style="left:746px;width:68.5px"><span>$1,853.35</span></div>
<div class="c" style="left:814.5px;width:68.5px"><span>201</span></div>
<div class="c" style="left:883px;width:102.5px"><span>Curtis Center | The<br>Atrium</span></div>
<div class="c" style="left:985.5px;width:123.0px"><span></span></div>
<div class="c" style="left:1108.5px;width:137.0px"><span>0</span></div>
<div class="c" style="left:1245.5px;width:68.0px"><span></span></div>
<div class="c" style="left:1313.5px;width:69.0px"><span>Internal -<br>Stations</span></div>
<div class="c" style="left:1382.5px;width:57.90000000000009px"><span>CATERING</span></div>
</div>
<div class="gr" style="top:247.5px;height:38.1px">
<div class="c c0" style="left:0;width:34px"><span class="cb"></span></div>
<div class="c" style="left:34px;width:123.30000000000001px"><span>Curtis Center</span></div>
<div class="c" style="left:157.3px;width:123.69999999999999px"><span>Alejo</span></div>
<div class="c" style="left:281px;width:82px"><span>2/28/2025</span></div>
<div class="c" style="left:363px;width:75px"><span>1207</span></div>
<div class="c" style="left:438px;width:123px"><span>Dinner company</span></div>
<div class="c" style="left:561px;width:83px"><span>Confirmed -<br>Contract</span></div>
<div class="c" style="left:644px;width:102px"><span></span></div>
<div class="c" style="left:746px;width:68.5px"><span>$19.50</span></div>
<div class="c" style="left:814.5px;width:68.5px"><span>0</span></div>
<div class="c" style="left:883px;width:102.5px"><span>Mann Center</span></div>
<div class="c" style="left:985.5px;width:123.0px"><span></span></div>
<div class="c" style="left:1108.5px;width:137.0px"><span>0</span></div>
<div class="c" style="left:1245.5px;width:68.0px"><span>10 Days<br>Prior</span></div>
<div class="c" style="left:1313.5px;width:69.0px"><span>Internal -<br>Stations</span></div>
<div class="c" style="left:1382.5px;width:57.90000000000009px"><span>CATERING</span></div>
</div>
<div class="gr alt" style="top:285.6px;height:38.1px">
<div class="c c0" style="left:0;width:34px"><span class="cb"></span></div>
<div class="c" style="left:34px;width:123.30000000000001px"><span>Curtis Center</span></div>
<div class="c" style="left:157.3px;width:123.69999999999999px"><span>Carlos</span></div>
<div class="c" style="left:281px;width:82px"><span>2/22/2025</span></div>
<div class="c" style="left:363px;width:75px"><span>1215</span></div>
<div class="c" style="left:438px;width:123px"><span>Dinner celebration</span></div>
<div class="c" style="left:561px;width:83px"><span>Confirmed -<br>Contract</span></div>
<div class="c" style="left:644px;width:102px"><span></span></div>
<div class="c" style="left:746px;width:68.5px"><span>$3,130.60</span></div>
<div class="c" style="left:814.5px;width:68.5px"><span>150</span></div>
<div class="c" style="left:883px;width:102.5px"><span>Mann Center</span></div>
<div class="c" style="left:985.5px;width:123.0px"><span>qa1@elecatedemo.com</span></div>
<div class="c" style="left:1108.5px;width:137.0px"><span>0</span></div>
<div class="c" style="left:1245.5px;width:68.0px"><span></span></div>
<div class="c" style="left:1313.5px;width:69.0px"><span>Internal -<br>Stations</span></div>
<div class="c" style="left:1382.5px;width:57.90000000000009px"><span>CATERING</span></div>
</div>
<div class="gr" style="top:323.7px;height:38.1px">
<div class="c c0" style="left:0;width:34px"><span class="cb"></span></div>
<div class="c" style="left:34px;width:123.30000000000001px"><span>Curtis Center</span></div>
<div class="c" style="left:157.3px;width:123.69999999999999px"><span>Francella</span></div>
<div class="c" style="left:281px;width:82px"><span>1/23/2025</span></div>
<div class="c" style="left:363px;width:75px"><span>1218</span></div>
<div class="c" style="left:438px;width:123px"><span>Wedding #3</span></div>
<div class="c" style="left:561px;width:83px"><span>Confirmed -<br>Contract</span></div>
<div class="c" style="left:644px;width:102px"><span>Admin Beta</span></div>
<div class="c" style="left:746px;width:68.5px"><span>$84.90</span></div>
<div class="c" style="left:814.5px;width:68.5px"><span>180</span></div>
<div class="c" style="left:883px;width:102.5px"><span>Mann Center</span></div>
<div class="c" style="left:985.5px;width:123.0px"><span>ftest@gmail.com</span></div>
<div class="c" style="left:1108.5px;width:137.0px"><span>0</span></div>
<div class="c" style="left:1245.5px;width:68.0px"><span></span></div>
<div class="c" style="left:1313.5px;width:69.0px"><span>Internal -<br>Stations</span></div>
<div class="c" style="left:1382.5px;width:57.90000000000009px"><span>CATERING</span></div>
</div>
<div class="gr alt" style="top:361.8px;height:38.2px">
<div class="c c0" style="left:0;width:34px"><span class="cb"></span></div>
<div class="c" style="left:34px;width:123.30000000000001px"><span>Curtis Center</span></div>
<div class="c" style="left:157.3px;width:123.69999999999999px"><span>14 Husky Productions</span></div>
<div class="c" style="left:281px;width:82px"><span>1/31/2025</span></div>
<div class="c" style="left:363px;width:75px"><span>1224</span></div>
<div class="c" style="left:438px;width:123px"><span>Pet Adoption Fair</span></div>
<div class="c" style="left:561px;width:83px"><span>Confirmed -<br>Contract</span></div>
<div class="c" style="left:644px;width:102px"><span>Ben Giler</span></div>
<div class="c" style="left:746px;width:68.5px"><span>$276.80</span></div>
<div class="c" style="left:814.5px;width:68.5px"><span>0</span></div>
<div class="c" style="left:883px;width:102.5px"><span>Fairmount Park<br>Horticulture Center</span></div>
<div class="c" style="left:985.5px;width:123.0px"><span>enezinorm@mac.com</span></div>
<div class="c" style="left:1108.5px;width:137.0px"><span>0</span></div>
<div class="c" style="left:1245.5px;width:68.0px"><span>1.5% 14<br>days net 15</span></div>
<div class="c" style="left:1313.5px;width:69.0px"><span>Internal -<br>Stations</span></div>
<div class="c" style="left:1382.5px;width:57.90000000000009px"><span>CATERING</span></div>
</div>
<div class="gr" style="top:400.0px;height:38.2px">
<div class="c c0" style="left:0;width:34px"><span class="cb"></span></div>
<div class="c" style="left:34px;width:123.30000000000001px"><span>Curtis Center</span></div>
<div class="c" style="left:157.3px;width:123.69999999999999px"><span>Zelma</span></div>
<div class="c" style="left:281px;width:82px"><span>2/6/2025</span></div>
<div class="c" style="left:363px;width:75px"><span>1225</span></div>
<div class="c" style="left:438px;width:123px"><span>17585 in BETA</span></div>
<div class="c" style="left:561px;width:83px"><span>Confirmed -<br>Contract</span></div>
<div class="c" style="left:644px;width:102px"><span></span></div>
<div class="c" style="left:746px;width:68.5px"><span>$100.11</span></div>
<div class="c" style="left:814.5px;width:68.5px"><span>166</span></div>
<div class="c" style="left:883px;width:102.5px"><span>Fairmount Park<br>Horticulture Center</span></div>
<div class="c" style="left:985.5px;width:123.0px"><span>jaylan.gaylord@dicki.net</span></div>
<div class="c" style="left:1108.5px;width:137.0px"><span>0</span></div>
<div class="c" style="left:1245.5px;width:68.0px"><span></span></div>
<div class="c" style="left:1313.5px;width:69.0px"><span>Internal -<br>Stations</span></div>
<div class="c" style="left:1382.5px;width:57.90000000000009px"><span>CATERING</span></div>
</div>
<div class="gr alt" style="top:438.2px;height:51.2px">
<div class="c c0" style="left:0;width:34px"><span class="cb"></span></div>
<div class="c" style="left:34px;width:123.30000000000001px"><span>Curtis Center</span></div>
<div class="c" style="left:157.3px;width:123.69999999999999px"><span>Alejo</span></div>
<div class="c" style="left:281px;width:82px"><span>2/28/2025</span></div>
<div class="c" style="left:363px;width:75px"><span>1229</span></div>
<div class="c" style="left:438px;width:123px"><span>Birthday day</span></div>
<div class="c" style="left:561px;width:83px"><span>Confirmed -<br>Contract</span></div>
<div class="c" style="left:644px;width:102px"><span></span></div>
<div class="c" style="left:746px;width:68.5px"><span>$289.81</span></div>
<div class="c" style="left:814.5px;width:68.5px"><span>0</span></div>
<div class="c" style="left:883px;width:102.5px"><span>National Museum<br>of American Jewish<br>History</span></div>
<div class="c" style="left:985.5px;width:123.0px"><span></span></div>
<div class="c" style="left:1108.5px;width:137.0px"><span>0</span></div>
<div class="c" style="left:1245.5px;width:68.0px"><span>10 Days<br>Prior</span></div>
<div class="c" style="left:1313.5px;width:69.0px"><span>Internal -<br>Stations</span></div>
<div class="c" style="left:1382.5px;width:57.90000000000009px"><span>CATERING</span></div>
</div>
<div class="gr" style="top:489.4px;height:52.6px">
<div class="c c0" style="left:0;width:34px"><span class="cb"></span></div>
<div class="c" style="left:34px;width:123.30000000000001px"><span>Curtis Center</span></div>
<div class="c" style="left:157.3px;width:123.69999999999999px"><span>Timothy S Pollard</span></div>
<div class="c" style="left:281px;width:82px"><span>2/17/2025</span></div>
<div class="c" style="left:363px;width:75px"><span>1232</span></div>
<div class="c" style="left:438px;width:123px"><span>Conference TEST 22</span></div>
<div class="c" style="left:561px;width:83px"><span>Confirmed -<br>Contract</span></div>
<div class="c" style="left:644px;width:102px"><span>Ben Giler</span></div>
<div class="c" style="left:746px;width:68.5px"><span>$1,530.51</span></div>
<div class="c" style="left:814.5px;width:68.5px"><span>155</span></div>
<div class="c" style="left:883px;width:102.5px"><span>Venue Test Javier</span></div>
<div class="c" style="left:985.5px;width:123.0px"><span>pollard@testemail.com</span></div>
<div class="c" style="left:1108.5px;width:137.0px"><span>0</span></div>
<div class="c" style="left:1245.5px;width:68.0px"><span></span></div>
<div class="c" style="left:1313.5px;width:69.0px"><span>Corporate -<br>Cocktail<br>Only</span></div>
<div class="c" style="left:1382.5px;width:57.90000000000009px"><span>CATERING</span></div>
</div>
<div class="abs" style="left:1443px;top:95px;width:4px;height:452px;background:#fafafa"></div>
<svg class="abs" style="left:1443px;top:102px" width="7" height="4" viewBox="0 0 7 4"><path d="M0 4h7L3.500 0z" fill="#7a7a7a"/></svg>
<div class="abs" style="left:1442.500px;top:110px;width:6.500px;height:252px;border-radius:3.500px;background:#8a8a8a"></div>
<svg class="abs" style="left:1443px;top:532px" width="7" height="4" viewBox="0 0 7 4"><path d="M0 0h7L3.500 4z" fill="#6a6a6a"/></svg>
<div class="abs" style="left:0;top:542px;width:1452.500px;height:13px;background:#f7f7f7"></div>
<svg class="abs" style="left:3px;top:545.500px" width="4" height="7" viewBox="0 0 4 7"><path d="M4 0v7L0 3.500z" fill="#555"/></svg>
<div class="abs" style="left:15px;top:545.500px;width:1267px;height:7px;border-radius:3.500px;background:#8a8a88"></div>
<svg class="abs" style="left:1429px;top:545.500px" width="4" height="7" viewBox="0 0 4 7"><path d="M0 0v7l4-3.500z" fill="#555"/></svg>
<div class="abs" style="left:0;top:555px;width:1452.500px;height:45px;background:#f7f7f7;border-top:1px solid #ececec"></div>
<div class="abs" style="left:47.500px;top:562px;width:19px;height:20px;background:#f9d3cf;border-radius:2px"></div>
<div class="abs pg" style="left:0;top:562px;height:20px;line-height:20px;font-size:10px;color:#e0574f;white-space:nowrap">
 <span class="abs" style="left:54.500px">1</span><span class="abs" style="left:74.500px">2</span><span class="abs" style="left:95px">3</span><span class="abs" style="left:115.500px">4</span><span class="abs" style="left:136px">5</span><span class="abs" style="left:156.500px">6</span>
</div>
<svg class="abs" style="left:12px;top:569px" width="6" height="6" viewBox="0 0 7 7"><path d="M.6 0v7" stroke="#8f8f8f" stroke-width="1.300"/><path d="M6.500 0v7L1.600 3.500z" fill="#8f8f8f"/></svg>
<svg class="abs" style="left:33.500px;top:569px" width="4.300" height="6" viewBox="0 0 5 7"><path d="M5 0v7L0 3.500z" fill="#8f8f8f"/></svg>
<svg class="abs" style="left:177px;top:569px" width="4.300" height="6" viewBox="0 0 5 7"><path d="M0 0v7l5-3.500z" fill="#222"/></svg>
<svg class="abs" style="left:197px;top:569px" width="6" height="6" viewBox="0 0 7 7"><path d="M6.400 0v7" stroke="#222" stroke-width="1.200"/><path d="M.5 0v7l4.900-3.500z" fill="#222"/></svg>
<span class="abs" style="left:1366px;top:562px;line-height:20px;font-size:9.750px;color:#444;white-space:nowrap;width:81px">1 - 18 of 103 items</span>

</div>
<div id="drop" class="abs" style="left:1101px;top:123.100px;width:120.500px;height:125px;background:#f2f2f2;box-shadow:0 1px 3px rgba(0,0,0,.25)">
 <div class="di" style="top:.5px"><svg style="left:7px;top:5px" width="6" height="10" viewBox="0 0 6 10"><text x="3" y="8.600" text-anchor="middle" font-family="Liberation Sans, sans-serif" font-weight="bold" font-size="10" fill="#222">$</text></svg><span>Apply Payment</span></div>
 <div class="di" style="top:21.300px"><svg style="left:5px;top:4.500px" width="10" height="11" viewBox="0 0 10 11"><path d="M3 1h5.600v6.600a1.700 1.700 0 0 1-1.700 1.700H1.600" stroke="#222" stroke-width="1.100" fill="none"/><path d="M3 1v6.600M.6 8.600a1.200 1.200 0 0 0 2.400 0V7.400" stroke="#222" stroke-width="1.100" fill="none"/><text x="5.900" y="7" text-anchor="middle" font-family="Liberation Sans, sans-serif" font-weight="bold" font-size="6" fill="#222">$</text></svg><span>Event Billing</span></div>
 <div class="di hov" style="top:42px"><svg style="left:5.500px;top:4.500px" width="9" height="11" viewBox="0 0 9 11"><rect x=".6" y="1.400" width="7.800" height="9" rx=".8" stroke="#555" stroke-width="1.100" fill="none"/><rect x="2.800" y=".2" width="3.400" height="2.200" fill="#555"/><path d="M2.200 4.600h4.600M2.200 6.400h4.600M2.200 8.200h4.600" stroke="#555" stroke-width=".8"/></svg><span style="color:#555">Invoice Notes</span></div>
 <div class="di" style="top:62.700px"><svg style="left:6px;top:4.500px" width="8" height="10.500" viewBox="0 0 8 10.500"><rect x="0" y="4.400" width="8" height="6.100" rx="1" fill="#111"/><path d="M1.800 4.600V3a2.200 2.200 0 0 1 4.400 0v1.600" stroke="#111" stroke-width="1.300" fill="none"/></svg><span>Lock Event Files</span></div>
 <div class="di" style="top:83.400px"><svg style="left:4.500px;top:4.500px" width="11" height="11" viewBox="0 0 11 11"><path d="M1.800 3.200A4.300 4.300 0 1 1 1.200 5.600" stroke="#222" stroke-width="1.100" fill="none"/><path d="M.4 1.200l.6 3 3-.6" stroke="#222" stroke-width="1.100" fill="none"/><path d="M5.600 3.200v2.600l1.800 1.100" stroke="#222" stroke-width="1" fill="none"/></svg><span>Reset Budget Hrs</span></div>
 <div class="di" style="top:104.100px"><svg style="left:4px;top:3.500px" width="10" height="11.500" viewBox="0 0 10 11.500"><rect x="2" y="5.400" width="8" height="6.100" rx="1" fill="#111"/><path d="M.8 4.200V2.800a2 2 0 0 1 4 0v2.800" stroke="#111" stroke-width="1.300" fill="none"/></svg><span>Unlock Event Files</span></div>
</div>
<div class="abs" style="left:1086.500px;top:96px;width:144.500px;height:159.500px;border:4.200px solid #e01b1b"></div>

</div>
<div class="abs" style="left:1618px;top:102px;width:7px;height:724px;background:#fbfbfb"></div>
<svg class="abs" style="left:1619px;top:104px" width="8" height="5" viewBox="0 0 8 5"><path d="M0 5h8L4 0z" fill="#7f7f7f"/></svg>
<div class="abs" style="left:1620.800px;top:116px;width:7px;height:720px;border-radius:3.500px;background:#787878"></div>
<div class="abs" style="left:0;top:680px;width:1625px;height:146px;pointer-events:none;background:linear-gradient(to bottom,rgba(0,0,0,0) 0%,rgba(0,0,0,.04) 17.800%,rgba(0,0,0,.075) 28%,rgba(0,0,0,.17) 48%,rgba(0,0,0,.28) 65%,rgba(0,0,0,.40) 73.300%,rgba(0,0,0,.50) 82.200%,rgba(0,0,0,.655) 100%)"></div>

</body>
</html>
